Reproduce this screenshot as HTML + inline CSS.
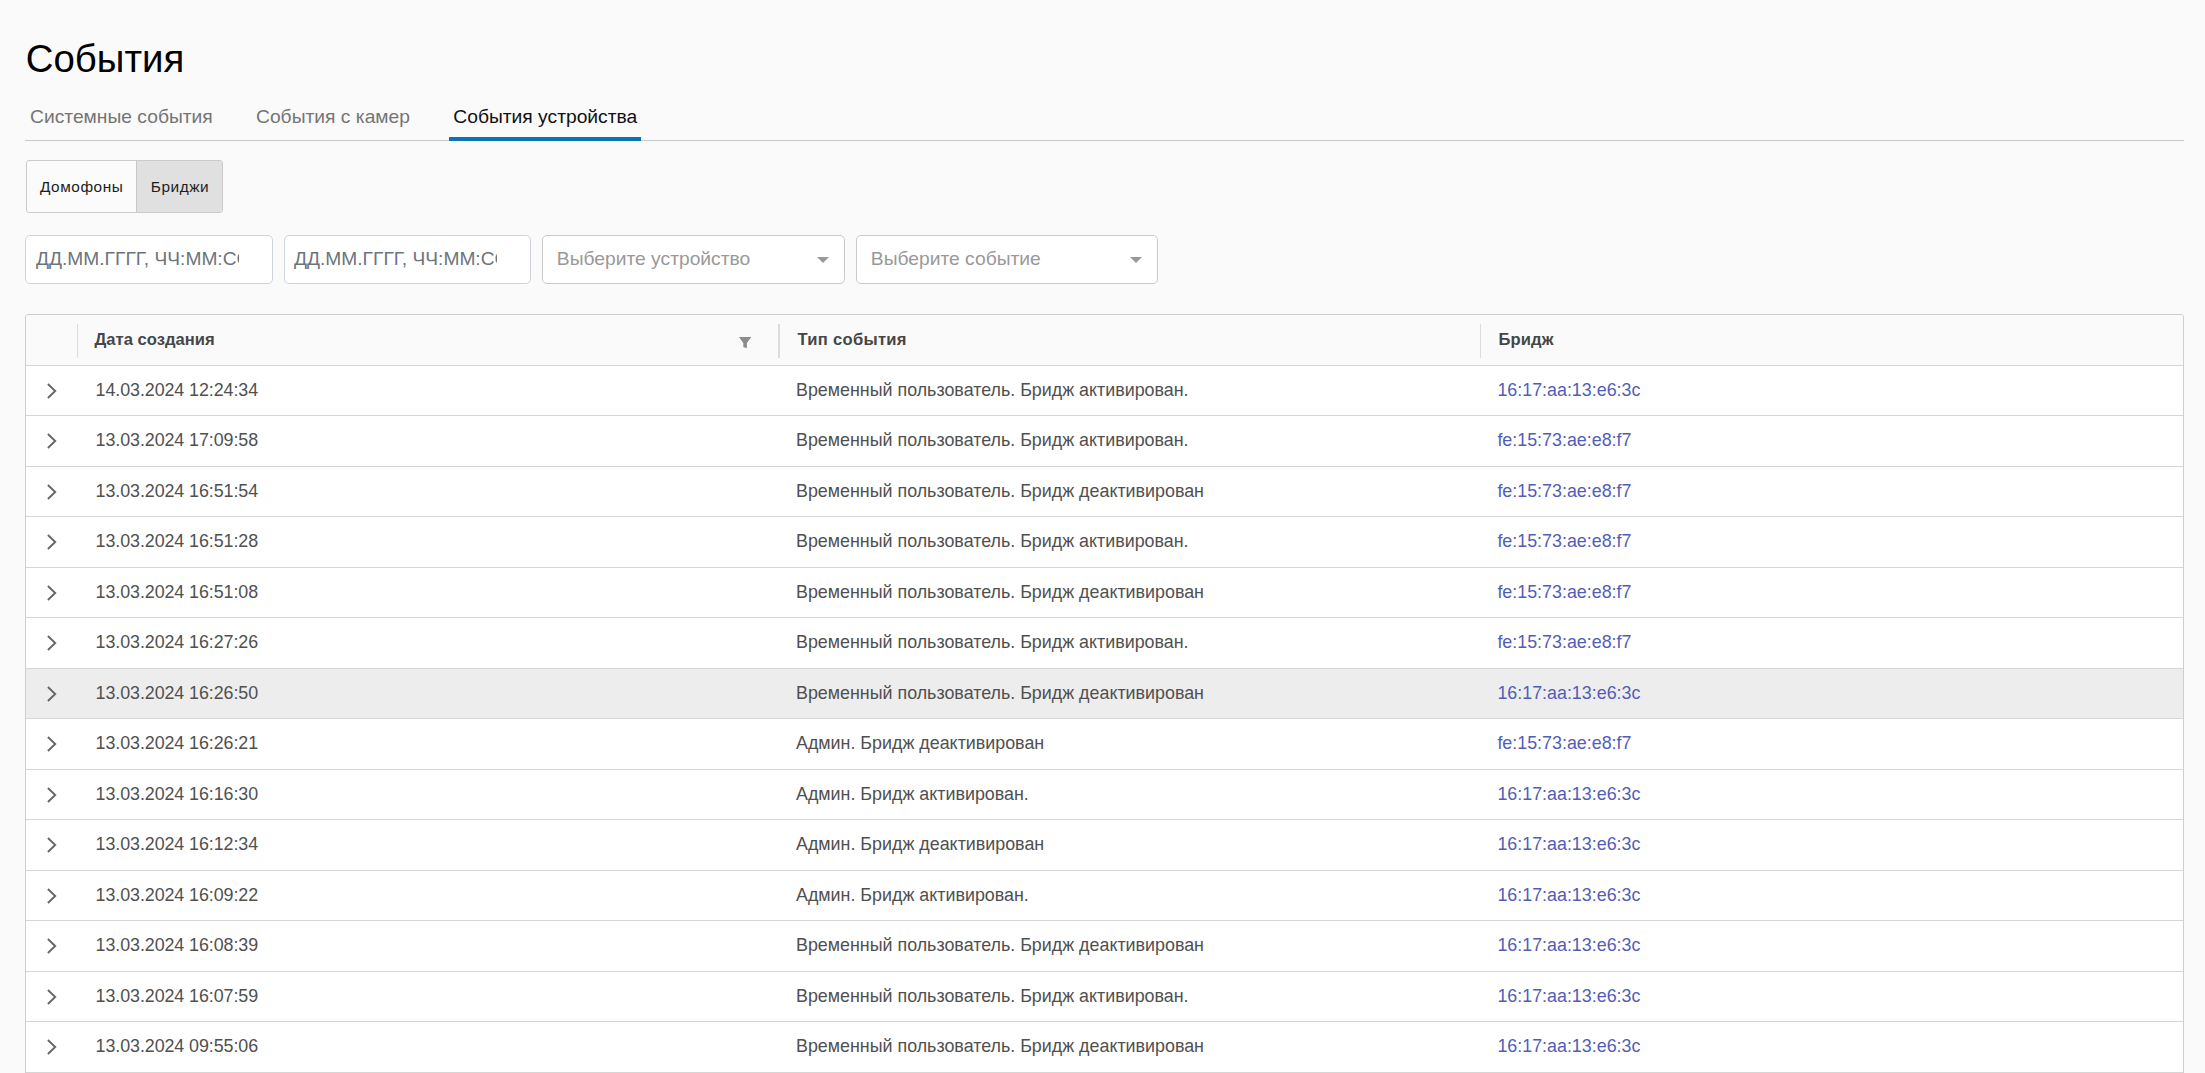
<!DOCTYPE html><html lang="ru"><head><meta charset="utf-8"><title>События</title><style>
*{box-sizing:border-box;margin:0;padding:0}
html,body{width:2205px;height:1073px;overflow:hidden;background:#fafafa}
body{font-family:"Liberation Sans",sans-serif;position:relative;color:#424242}
div{position:absolute;white-space:pre}
h1{position:absolute;font-weight:400;color:#000;white-space:pre}
.tab{color:#757575}
.tab.on{color:#111}
.tabline{left:25px;top:140px;width:2159px;height:1px;background:#c8c8c8}
.ink{left:449px;top:137px;width:192px;height:4px;background:#0b74b9}
.bg{left:26px;top:160px;width:197px;height:53px;border:1px solid #cbcbcb;border-radius:3px;overflow:hidden;background:#fbfbfb}
.bg .b2{left:109px;top:-1px;width:87px;height:53px;background:#e0e0e0;border-left:1px solid #c8c8c8}
.bt{color:#1e1e1e}
.inp{top:235px;height:49px;background:#fff;border:1px solid #ced4da;border-radius:5px;overflow:hidden}
.inp div{color:#6c757d;width:203px;overflow:hidden}
.sel{top:235px;height:49px;background:#fff;border:1px solid #cacaca;border-radius:5px}
.sel div{color:#999}
.sel i{position:absolute;top:21px;width:0;height:0;border-style:solid;border-width:6.5px 6.25px 0 6.25px;border-color:#999 transparent transparent transparent}
.grid{left:25px;top:314px;width:2159px;height:800px;border:1px solid #cecece;border-radius:3px;background:#fff;overflow:hidden}
.hd{left:0;top:0;width:100%;height:51px;background:#fafafa}
.hl{left:26px;width:2157px;height:1px;background:#d6d6d6}
.vd{top:324px;width:1px;height:34px;background:#dcdcdc}
.th{font-weight:700;color:#464646}
.td{color:#505050}
.lk{color:#525db8}
.hov{left:26px;width:2157px;background:#ededed}
svg{position:absolute;overflow:visible}
</style></head><body>
<h1 style="left:25.8px;top:35.69px;font-size:38.4px;line-height:46px">События</h1>
<div class="tab" style="left:30px;top:104.93px;font-size:19.25px;line-height:24px;">Системные события</div>
<div class="tab" style="left:256px;top:104.93px;font-size:19.25px;line-height:24px;">События с камер</div>
<div class="tab on" style="left:453.3px;top:104.93px;font-size:19.25px;line-height:24px;">События устройства</div>
<div class="tabline"></div><div class="ink"></div>
<div class="bg"><div class="b2"></div></div>
<div class="bt" style="left:39.9px;top:176.76px;font-size:15.4px;line-height:19px;letter-spacing:0.55px">Домофоны</div>
<div class="bt" style="left:150.8px;top:176.76px;font-size:15.4px;line-height:19px;letter-spacing:0.55px">Бриджи</div>
<div class="inp" style="left:25px;width:248px"><div class="" style="left:10px;top:11.15px;font-size:19.2px;line-height:24px;">ДД.ММ.ГГГГ, ЧЧ:ММ:СС</div></div>
<div class="inp" style="left:284px;width:247px"><div class="" style="left:9px;top:11.15px;font-size:19.2px;line-height:24px;width:202.5px">ДД.ММ.ГГГГ, ЧЧ:ММ:СС</div></div>
<div class="sel" style="left:542px;width:303px"><div class="" style="left:13.8px;top:10.73px;font-size:19.25px;line-height:24px;">Выберите устройство</div><i style="left:274px"></i></div>
<div class="sel" style="left:856px;width:302px"><div class="" style="left:13.8px;top:10.73px;font-size:19.25px;line-height:24px;">Выберите событие</div><i style="left:273px"></i></div>
<div class="grid"><div class="hd"></div></div>
<div class="hov" style="top:669px;height:49px"></div>
<div class="hl" style="top:365px"></div>
<div class="hl" style="top:415px"></div>
<div class="hl" style="top:466px"></div>
<div class="hl" style="top:516px"></div>
<div class="hl" style="top:567px"></div>
<div class="hl" style="top:617px"></div>
<div class="hl" style="top:668px"></div>
<div class="hl" style="top:718px"></div>
<div class="hl" style="top:769px"></div>
<div class="hl" style="top:819px"></div>
<div class="hl" style="top:870px"></div>
<div class="hl" style="top:920px"></div>
<div class="hl" style="top:971px"></div>
<div class="hl" style="top:1021px"></div>
<div class="hl" style="top:1072px"></div>
<div class="vd" style="left:77px;width:1px"></div>
<div class="vd" style="left:778px;width:2px"></div>
<div class="vd" style="left:1480px;width:1px"></div>
<div class="th" style="left:94.5px;top:328.75px;font-size:16.6px;line-height:21px;letter-spacing:0px">Дата создания</div>
<div class="th" style="left:797.6px;top:328.75px;font-size:16.6px;line-height:21px;letter-spacing:0.27px">Тип события</div>
<div class="th" style="left:1498.5px;top:328.75px;font-size:16.6px;line-height:21px;letter-spacing:0.12px">Бридж</div>
<svg style="left:738.9px;top:336.6px" width="13" height="12" viewBox="0 0 13 12"><path d="M0 0H12.3L7.9 5.9V11.3L4.3 10V5.9Z" fill="#8c8c8c"/></svg>
<svg style="left:46px;top:382.2px" width="12" height="18" viewBox="0 0 12 18"><path d="M1.9 2L9.2 9L1.9 16" fill="none" stroke="#666" stroke-width="1.9"/></svg>
<div class="td" style="left:95.6px;top:378.81px;font-size:17.875px;line-height:22px;letter-spacing:-0.075px">14.03.2024 12:24:34</div>
<div class="td" style="left:796.0px;top:378.81px;font-size:17.875px;line-height:22px;">Временный пользователь. Бридж активирован.</div>
<div class="td lk" style="left:1497.4px;top:378.81px;font-size:17.875px;line-height:22px;">16:17:aa:13:e6:3c</div>
<svg style="left:46px;top:432.2px" width="12" height="18" viewBox="0 0 12 18"><path d="M1.9 2L9.2 9L1.9 16" fill="none" stroke="#666" stroke-width="1.9"/></svg>
<div class="td" style="left:95.6px;top:428.81px;font-size:17.875px;line-height:22px;letter-spacing:-0.075px">13.03.2024 17:09:58</div>
<div class="td" style="left:796.0px;top:428.81px;font-size:17.875px;line-height:22px;">Временный пользователь. Бридж активирован.</div>
<div class="td lk" style="left:1497.4px;top:428.81px;font-size:17.875px;line-height:22px;">fe:15:73:ae:e8:f7</div>
<svg style="left:46px;top:483.2px" width="12" height="18" viewBox="0 0 12 18"><path d="M1.9 2L9.2 9L1.9 16" fill="none" stroke="#666" stroke-width="1.9"/></svg>
<div class="td" style="left:95.6px;top:479.81px;font-size:17.875px;line-height:22px;letter-spacing:-0.075px">13.03.2024 16:51:54</div>
<div class="td" style="left:796.0px;top:479.81px;font-size:17.875px;line-height:22px;">Временный пользователь. Бридж деактивирован</div>
<div class="td lk" style="left:1497.4px;top:479.81px;font-size:17.875px;line-height:22px;">fe:15:73:ae:e8:f7</div>
<svg style="left:46px;top:533.2px" width="12" height="18" viewBox="0 0 12 18"><path d="M1.9 2L9.2 9L1.9 16" fill="none" stroke="#666" stroke-width="1.9"/></svg>
<div class="td" style="left:95.6px;top:529.81px;font-size:17.875px;line-height:22px;letter-spacing:-0.075px">13.03.2024 16:51:28</div>
<div class="td" style="left:796.0px;top:529.81px;font-size:17.875px;line-height:22px;">Временный пользователь. Бридж активирован.</div>
<div class="td lk" style="left:1497.4px;top:529.81px;font-size:17.875px;line-height:22px;">fe:15:73:ae:e8:f7</div>
<svg style="left:46px;top:584.2px" width="12" height="18" viewBox="0 0 12 18"><path d="M1.9 2L9.2 9L1.9 16" fill="none" stroke="#666" stroke-width="1.9"/></svg>
<div class="td" style="left:95.6px;top:580.81px;font-size:17.875px;line-height:22px;letter-spacing:-0.075px">13.03.2024 16:51:08</div>
<div class="td" style="left:796.0px;top:580.81px;font-size:17.875px;line-height:22px;">Временный пользователь. Бридж деактивирован</div>
<div class="td lk" style="left:1497.4px;top:580.81px;font-size:17.875px;line-height:22px;">fe:15:73:ae:e8:f7</div>
<svg style="left:46px;top:634.2px" width="12" height="18" viewBox="0 0 12 18"><path d="M1.9 2L9.2 9L1.9 16" fill="none" stroke="#666" stroke-width="1.9"/></svg>
<div class="td" style="left:95.6px;top:630.81px;font-size:17.875px;line-height:22px;letter-spacing:-0.075px">13.03.2024 16:27:26</div>
<div class="td" style="left:796.0px;top:630.81px;font-size:17.875px;line-height:22px;">Временный пользователь. Бридж активирован.</div>
<div class="td lk" style="left:1497.4px;top:630.81px;font-size:17.875px;line-height:22px;">fe:15:73:ae:e8:f7</div>
<svg style="left:46px;top:685.2px" width="12" height="18" viewBox="0 0 12 18"><path d="M1.9 2L9.2 9L1.9 16" fill="none" stroke="#666" stroke-width="1.9"/></svg>
<div class="td" style="left:95.6px;top:681.81px;font-size:17.875px;line-height:22px;letter-spacing:-0.075px">13.03.2024 16:26:50</div>
<div class="td" style="left:796.0px;top:681.81px;font-size:17.875px;line-height:22px;">Временный пользователь. Бридж деактивирован</div>
<div class="td lk" style="left:1497.4px;top:681.81px;font-size:17.875px;line-height:22px;">16:17:aa:13:e6:3c</div>
<svg style="left:46px;top:735.2px" width="12" height="18" viewBox="0 0 12 18"><path d="M1.9 2L9.2 9L1.9 16" fill="none" stroke="#666" stroke-width="1.9"/></svg>
<div class="td" style="left:95.6px;top:731.81px;font-size:17.875px;line-height:22px;letter-spacing:-0.075px">13.03.2024 16:26:21</div>
<div class="td" style="left:796.0px;top:731.81px;font-size:17.875px;line-height:22px;">Админ. Бридж деактивирован</div>
<div class="td lk" style="left:1497.4px;top:731.81px;font-size:17.875px;line-height:22px;">fe:15:73:ae:e8:f7</div>
<svg style="left:46px;top:786.2px" width="12" height="18" viewBox="0 0 12 18"><path d="M1.9 2L9.2 9L1.9 16" fill="none" stroke="#666" stroke-width="1.9"/></svg>
<div class="td" style="left:95.6px;top:782.81px;font-size:17.875px;line-height:22px;letter-spacing:-0.075px">13.03.2024 16:16:30</div>
<div class="td" style="left:796.0px;top:782.81px;font-size:17.875px;line-height:22px;">Админ. Бридж активирован.</div>
<div class="td lk" style="left:1497.4px;top:782.81px;font-size:17.875px;line-height:22px;">16:17:aa:13:e6:3c</div>
<svg style="left:46px;top:836.2px" width="12" height="18" viewBox="0 0 12 18"><path d="M1.9 2L9.2 9L1.9 16" fill="none" stroke="#666" stroke-width="1.9"/></svg>
<div class="td" style="left:95.6px;top:832.81px;font-size:17.875px;line-height:22px;letter-spacing:-0.075px">13.03.2024 16:12:34</div>
<div class="td" style="left:796.0px;top:832.81px;font-size:17.875px;line-height:22px;">Админ. Бридж деактивирован</div>
<div class="td lk" style="left:1497.4px;top:832.81px;font-size:17.875px;line-height:22px;">16:17:aa:13:e6:3c</div>
<svg style="left:46px;top:887.2px" width="12" height="18" viewBox="0 0 12 18"><path d="M1.9 2L9.2 9L1.9 16" fill="none" stroke="#666" stroke-width="1.9"/></svg>
<div class="td" style="left:95.6px;top:883.81px;font-size:17.875px;line-height:22px;letter-spacing:-0.075px">13.03.2024 16:09:22</div>
<div class="td" style="left:796.0px;top:883.81px;font-size:17.875px;line-height:22px;">Админ. Бридж активирован.</div>
<div class="td lk" style="left:1497.4px;top:883.81px;font-size:17.875px;line-height:22px;">16:17:aa:13:e6:3c</div>
<svg style="left:46px;top:937.2px" width="12" height="18" viewBox="0 0 12 18"><path d="M1.9 2L9.2 9L1.9 16" fill="none" stroke="#666" stroke-width="1.9"/></svg>
<div class="td" style="left:95.6px;top:933.81px;font-size:17.875px;line-height:22px;letter-spacing:-0.075px">13.03.2024 16:08:39</div>
<div class="td" style="left:796.0px;top:933.81px;font-size:17.875px;line-height:22px;">Временный пользователь. Бридж деактивирован</div>
<div class="td lk" style="left:1497.4px;top:933.81px;font-size:17.875px;line-height:22px;">16:17:aa:13:e6:3c</div>
<svg style="left:46px;top:988.2px" width="12" height="18" viewBox="0 0 12 18"><path d="M1.9 2L9.2 9L1.9 16" fill="none" stroke="#666" stroke-width="1.9"/></svg>
<div class="td" style="left:95.6px;top:984.81px;font-size:17.875px;line-height:22px;letter-spacing:-0.075px">13.03.2024 16:07:59</div>
<div class="td" style="left:796.0px;top:984.81px;font-size:17.875px;line-height:22px;">Временный пользователь. Бридж активирован.</div>
<div class="td lk" style="left:1497.4px;top:984.81px;font-size:17.875px;line-height:22px;">16:17:aa:13:e6:3c</div>
<svg style="left:46px;top:1038.2px" width="12" height="18" viewBox="0 0 12 18"><path d="M1.9 2L9.2 9L1.9 16" fill="none" stroke="#666" stroke-width="1.9"/></svg>
<div class="td" style="left:95.6px;top:1034.81px;font-size:17.875px;line-height:22px;letter-spacing:-0.075px">13.03.2024 09:55:06</div>
<div class="td" style="left:796.0px;top:1034.81px;font-size:17.875px;line-height:22px;">Временный пользователь. Бридж деактивирован</div>
<div class="td lk" style="left:1497.4px;top:1034.81px;font-size:17.875px;line-height:22px;">16:17:aa:13:e6:3c</div>
</body></html>
